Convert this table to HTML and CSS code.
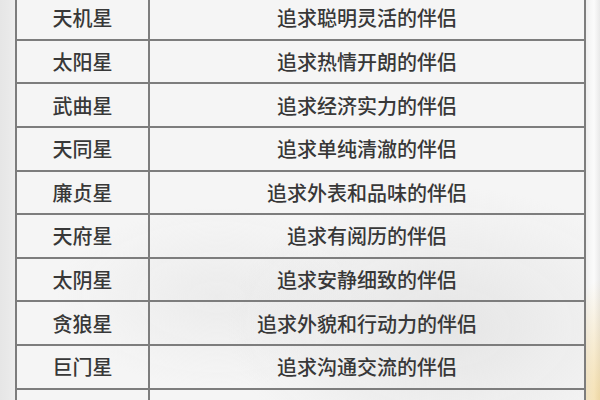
FILE: index.html
```html
<!DOCTYPE html>
<html lang="zh">
<head>
<meta charset="utf-8">
<link rel="stylesheet" href="styles.css">
</head>
<body>
<div class="page">
  <table class="stars">
    <tbody>
      <tr><td class="name">天机星</td><td class="desc">追求聪明灵活的伴侣</td></tr>
      <tr><td class="name">太阳星</td><td class="desc">追求热情开朗的伴侣</td></tr>
      <tr><td class="name">武曲星</td><td class="desc">追求经济实力的伴侣</td></tr>
      <tr><td class="name">天同星</td><td class="desc">追求单纯清澈的伴侣</td></tr>
      <tr><td class="name">廉贞星</td><td class="desc">追求外表和品味的伴侣</td></tr>
      <tr><td class="name">天府星</td><td class="desc">追求有阅历的伴侣</td></tr>
      <tr><td class="name">太阴星</td><td class="desc">追求安静细致的伴侣</td></tr>
      <tr><td class="name">贪狼星</td><td class="desc">追求外貌和行动力的伴侣</td></tr>
      <tr><td class="name">巨门星</td><td class="desc">追求沟通交流的伴侣</td></tr>
      <tr><td class="name"></td><td class="desc"></td></tr>
    </tbody>
  </table>
</div>
</body>
</html>
```
FILE: styles.css
```css
html, body {
  margin: 0;
  padding: 0;
  height: 100%;
  overflow: hidden;
}
body {
  background:
    radial-gradient(ellipse 40px 120px at 600px 400px, rgba(240, 200, 110, 0.55), rgba(240, 200, 110, 0) 100%),
    linear-gradient(90deg, #e6e6e6 0, #e9e9e9 8px, #eeeeee 15px, #eeeeee 586px, #f6f6f6 590px, #fbfbfb 594px, #e9e9e9 600px);
  font-family: "Noto Sans CJK SC", "Noto Sans", sans-serif;
}
.page {
  padding-left: 15px;
  margin-top: -5px;
}
.stars {
  width: 571px;
  border-collapse: separate;
  border-spacing: 0;
  border-top: 2px solid #7d7d7d;
  border-left: 2px solid #7d7d7d;
  background:
    radial-gradient(ellipse 220px 140px at 430px 330px, rgba(200, 200, 200, 0.35), rgba(200, 200, 200, 0) 100%),
    radial-gradient(ellipse 160px 90px at 200px 300px, rgba(215, 215, 215, 0.3), rgba(215, 215, 215, 0) 100%),
    #f5f5f5;
}
.stars td {
  height: 41.625px;
  padding: 1px 0 0 0;
  box-sizing: border-box;
  border-right: 2px solid #7d7d7d;
  border-bottom: 2px solid #7d7d7d;
  text-align: center;
  vertical-align: middle;
  font-size: 20px;
  font-weight: 500;
  line-height: 24px;
  color: #383838;
  white-space: nowrap;
}
.stars tr {
  height: 43.625px;
}
.stars td.name {
  width: 133px;
}
```
